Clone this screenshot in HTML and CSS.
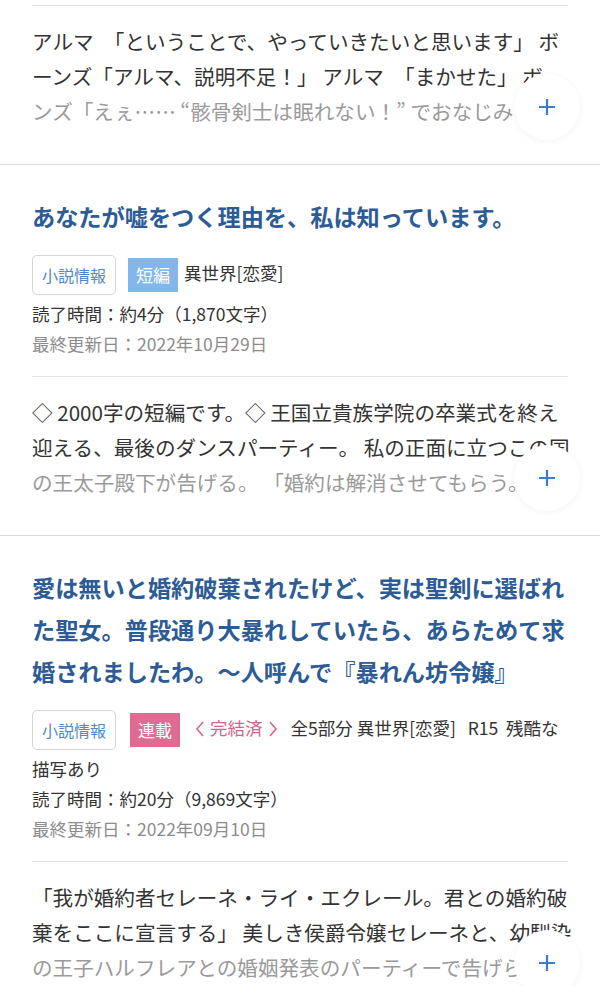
FILE: index.html
```html
<!DOCTYPE html>
<html lang="ja">
<head>
<meta charset="utf-8">
<title>小説一覧</title>
<link rel="stylesheet" href="styles.css">
</head>
<body>
<div class="list">
  <article class="item item--tail">
    <div class="summary">
      <div class="line">アルマ　「ということで、やっていきたいと思います」 ボ</div>
      <div class="line">ーンズ「アルマ、説明不足！」 アルマ　「まかせた」 ボ</div>
      <div class="line line--fade">ンズ「えぇ…… “骸骨剣士は眠れない！” でおなじみの</div>
      <button class="more" type="button" aria-label="もっと見る"><svg viewBox="0 0 20 20" width="20" height="20"><path d="M10 2v16M2 10h16" stroke="#3d7bcc" stroke-width="2.2" fill="none"/></svg></button>
    </div>
  </article>

  <article class="item">
    <h2 class="title">あなたが嘘をつく理由を、私は知っています。</h2>
    <div class="meta">
      <div class="tags"><span class="info">小説情報</span><span class="label label--short">短編</span>異世界[恋愛]</div>
      <div>読了時間：約4分（1,870文字）</div>
      <div class="date">最終更新日：2022年10月29日</div>
    </div>
    <div class="summary">
      <div class="line">◇ 2000字の短編です。◇ 王国立貴族学院の卒業式を終え</div>
      <div class="line">迎える、最後のダンスパーティー。 私の正面に立つこの国</div>
      <div class="line line--fade">の王太子殿下が告げる。 「婚約は解消させてもらう。」</div>
      <button class="more" type="button" aria-label="もっと見る"><svg viewBox="0 0 20 20" width="20" height="20"><path d="M10 2v16M2 10h16" stroke="#3d7bcc" stroke-width="2.2" fill="none"/></svg></button>
    </div>
  </article>

  <article class="item">
    <h2 class="title">愛は無いと婚約破棄されたけど、実は聖剣に選ばれた聖女。普段通り大暴れしていたら、あらためて求婚されましたわ。～人呼んで『暴れん坊令嬢』</h2>
    <div class="meta">
      <div class="tags"><span class="info">小説情報</span><span class="label label--serial">連載</span><span class="status"><svg class="chev" viewBox="0 0 10 18" width="10" height="18"><path d="M8 2L2 9l6 7" stroke="#d9658e" stroke-width="1.6" fill="none"/></svg>完結済<svg class="chev" viewBox="0 0 10 18" width="10" height="18"><path d="M2 2l6 7-6 7" stroke="#d9658e" stroke-width="1.6" fill="none"/></svg></span>全5部分 異世界[恋愛]&nbsp;&nbsp; R15 &nbsp;残酷な<br>描写あり</div>
      <div>読了時間：約20分（9,869文字）</div>
      <div class="date">最終更新日：2022年09月10日</div>
    </div>
    <div class="summary">
      <div class="line">「我が婚約者セレーネ・ライ・エクレール。君との婚約破</div>
      <div class="line">棄をここに宣言する」 美しき侯爵令嬢セレーネと、幼馴染</div>
      <div class="line line--fade">の王子ハルフレアとの婚姻発表のパーティーで告げら</div>
      <button class="more" type="button" aria-label="もっと見る"><svg viewBox="0 0 20 20" width="20" height="20"><path d="M10 2v16M2 10h16" stroke="#3d7bcc" stroke-width="2.2" fill="none"/></svg></button>
    </div>
  </article>
</div>
</body>
</html>
```

FILE: styles.css
```css
html, body {
  margin: 0;
  padding: 0;
  background: #fff;
}

body {
  font-family: "Noto Sans CJK JP", "Noto Sans", sans-serif;
  color: #333;
  overflow: hidden;
}

.item {
  border-bottom: 1px solid #dcdcdc;
  padding: 30px 32px 0;
}

.item--tail {
  padding-top: 5px;
}

.title {
  margin: 0;
  font-size: 23.2px;
  line-height: 42px;
  font-weight: 700;
  color: #2c5b95;
}

.meta {
  margin-top: 14px;
  padding-bottom: 17px;
  font-size: 17.5px;
  line-height: 30px;
}

.info {
  display: inline-block;
  box-sizing: border-box;
  height: 40px;
  line-height: 38px;
  padding: 0 9px;
  margin: 4px 12px 4px 0;
  border: 1px solid #d5d5d5;
  border-radius: 5px;
  font-size: 16px;
  color: #5089c8;
  vertical-align: middle;
}

.label {
  display: inline-block;
  height: 34px;
  line-height: 34px;
  padding: 0 8px;
  margin-right: 6px;
  color: #fff;
  font-size: 17px;
  vertical-align: middle;
}

.label--short {
  background: #83b7ec;
}

.label--serial {
  background: #df6a92;
  margin-left: 2px;
}

.status {
  color: #d5648c;
  margin-left: 4px;
  margin-right: 8px;
}

.chev {
  vertical-align: -3px;
  margin: 0 5px;
}

.date {
  color: #8c8c8c;
}

.summary {
  position: relative;
  border-top: 1px solid #e4e4e4;
  padding: 18px 0 35px;
  font-size: 20.6px;
  line-height: 35px;
}

.line {
  white-space: nowrap;
}

.line--fade {
  color: #9a9a9a;
}

.more {
  position: absolute;
  right: -12px;
  top: 68px;
  width: 66px;
  height: 66px;
  padding: 0;
  border: 0;
  border-radius: 50%;
  background: #fff;
  box-shadow: 0 1px 7px rgba(0, 0, 0, 0.05);
  display: flex;
  align-items: center;
  justify-content: center;
}
```
